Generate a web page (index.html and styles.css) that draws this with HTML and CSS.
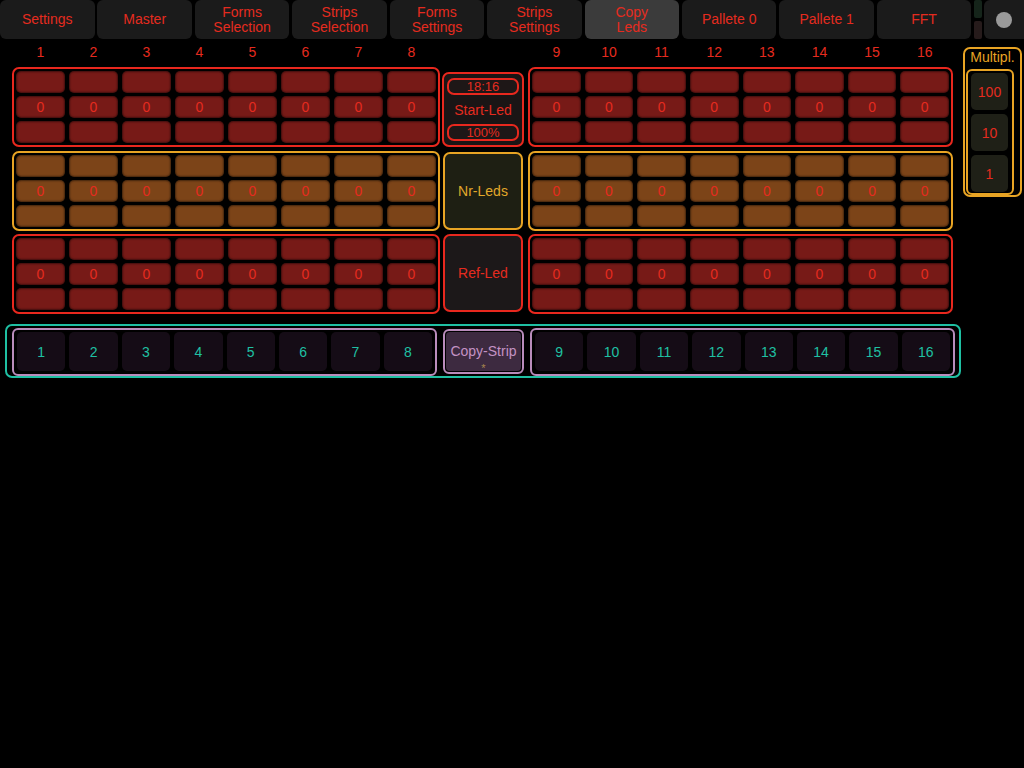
FILE: index.html
```html
<!DOCTYPE html>
<html>
<head>
<meta charset="utf-8">
<link rel="stylesheet" href="styles.css">
</head>
<body>
<div class="topbar">
  <div class="tab">Settings</div>
  <div class="tab">Master</div>
  <div class="tab">Forms<br>Selection</div>
  <div class="tab">Strips<br>Selection</div>
  <div class="tab">Forms<br>Settings</div>
  <div class="tab">Strips<br>Settings</div>
  <div class="tab active">Copy<br>Leds</div>
  <div class="tab">Pallete 0</div>
  <div class="tab">Pallete 1</div>
  <div class="tab">FFT</div>
  <div class="mini"><div class="mini-top"></div><div class="mini-bot"></div></div>
  <div class="circle-btn"><div class="circle"></div></div>
</div>

<div class="main">
  <div class="left">
    <div class="nums">
      <div class="nums-grp nl"><span>1</span><span>2</span><span>3</span><span>4</span><span>5</span><span>6</span><span>7</span><span>8</span></div>
      <div class="nums-gap"></div>
      <div class="nums-grp nr"><span>9</span><span>10</span><span>11</span><span>12</span><span>13</span><span>14</span><span>15</span><span>16</span></div>
    </div>

    <div class="row">
      <div class="grp gl red">
        <div class="c"></div><div class="c"></div><div class="c"></div><div class="c"></div><div class="c"></div><div class="c"></div><div class="c"></div><div class="c"></div>
        <div class="c">0</div><div class="c">0</div><div class="c">0</div><div class="c">0</div><div class="c">0</div><div class="c">0</div><div class="c">0</div><div class="c">0</div>
        <div class="c"></div><div class="c"></div><div class="c"></div><div class="c"></div><div class="c"></div><div class="c"></div><div class="c"></div><div class="c"></div>
      </div>
      <div class="center start">
        <div class="pill">18:16</div>
        <div class="start-label">Start-Led</div>
        <div class="pill">100%</div>
      </div>
      <div class="grp gr red">
        <div class="c"></div><div class="c"></div><div class="c"></div><div class="c"></div><div class="c"></div><div class="c"></div><div class="c"></div><div class="c"></div>
        <div class="c">0</div><div class="c">0</div><div class="c">0</div><div class="c">0</div><div class="c">0</div><div class="c">0</div><div class="c">0</div><div class="c">0</div>
        <div class="c"></div><div class="c"></div><div class="c"></div><div class="c"></div><div class="c"></div><div class="c"></div><div class="c"></div><div class="c"></div>
      </div>
    </div>

    <div class="row row2">
      <div class="grp gl orange">
        <div class="c"></div><div class="c"></div><div class="c"></div><div class="c"></div><div class="c"></div><div class="c"></div><div class="c"></div><div class="c"></div>
        <div class="c">0</div><div class="c">0</div><div class="c">0</div><div class="c">0</div><div class="c">0</div><div class="c">0</div><div class="c">0</div><div class="c">0</div>
        <div class="c"></div><div class="c"></div><div class="c"></div><div class="c"></div><div class="c"></div><div class="c"></div><div class="c"></div><div class="c"></div>
      </div>
      <div class="center nrleds">Nr-Leds</div>
      <div class="grp gr orange">
        <div class="c"></div><div class="c"></div><div class="c"></div><div class="c"></div><div class="c"></div><div class="c"></div><div class="c"></div><div class="c"></div>
        <div class="c">0</div><div class="c">0</div><div class="c">0</div><div class="c">0</div><div class="c">0</div><div class="c">0</div><div class="c">0</div><div class="c">0</div>
        <div class="c"></div><div class="c"></div><div class="c"></div><div class="c"></div><div class="c"></div><div class="c"></div><div class="c"></div><div class="c"></div>
      </div>
    </div>

    <div class="row row3">
      <div class="grp gl red">
        <div class="c"></div><div class="c"></div><div class="c"></div><div class="c"></div><div class="c"></div><div class="c"></div><div class="c"></div><div class="c"></div>
        <div class="c">0</div><div class="c">0</div><div class="c">0</div><div class="c">0</div><div class="c">0</div><div class="c">0</div><div class="c">0</div><div class="c">0</div>
        <div class="c"></div><div class="c"></div><div class="c"></div><div class="c"></div><div class="c"></div><div class="c"></div><div class="c"></div><div class="c"></div>
      </div>
      <div class="center refled">Ref-Led</div>
      <div class="grp gr red">
        <div class="c"></div><div class="c"></div><div class="c"></div><div class="c"></div><div class="c"></div><div class="c"></div><div class="c"></div><div class="c"></div>
        <div class="c">0</div><div class="c">0</div><div class="c">0</div><div class="c">0</div><div class="c">0</div><div class="c">0</div><div class="c">0</div><div class="c">0</div>
        <div class="c"></div><div class="c"></div><div class="c"></div><div class="c"></div><div class="c"></div><div class="c"></div><div class="c"></div><div class="c"></div>
      </div>
    </div>

    <div class="strip">
      <div class="sgrp">
        <div class="sb">1</div><div class="sb">2</div><div class="sb">3</div><div class="sb">4</div><div class="sb">5</div><div class="sb">6</div><div class="sb">7</div><div class="sb">8</div>
      </div>
      <div class="copy-strip"><div class="copy-inner"><span class="copy-label">Copy-Strip</span><span class="star">*</span></div></div>
      <div class="sgrp">
        <div class="sb">9</div><div class="sb">10</div><div class="sb">11</div><div class="sb">12</div><div class="sb">13</div><div class="sb">14</div><div class="sb">15</div><div class="sb">16</div>
      </div>
    </div>
  </div>

  <div class="mult">
    <div class="mult-label">Multipl.</div>
    <div class="mult-inner">
      <div class="mb">100</div>
      <div class="mb">10</div>
      <div class="mb">1</div>
    </div>
  </div>
</div>
</body>
</html>
```

FILE: styles.css
```css
html, body {
  margin: 0;
  padding: 0;
  background: #000;
}
body {
  width: 1024px;
  height: 768px;
  overflow: hidden;
  font-family: "Liberation Sans", Arial, sans-serif;
  font-size: 14px;
  color: #e52b1f;
}

/* top bar */
.topbar {
  display: flex;
  height: 39px;
}
.tab {
  flex: 0 0 94.5px;
  margin-right: 2.93px;
  background: #1b1b1b;
  border-radius: 6px;
  display: flex;
  align-items: center;
  justify-content: center;
  text-align: center;
  line-height: 15px;
  color: #e52b1f;
}
.tab.active {
  background: #3b3b3b;
}
.mini {
  flex: 0 0 8px;
  margin-right: 2px;
  display: flex;
  flex-direction: column;
  gap: 3px;
}
.mini-top {
  height: 18px;
  background: #15241a;
  border-radius: 2px;
}
.mini-bot {
  height: 18px;
  background: #261b1b;
  border-radius: 2px;
}
.circle-btn {
  flex: 0 0 40px;
  background: #1b1b1b;
  border-radius: 6px 0 0 6px;
  display: flex;
  align-items: center;
  justify-content: center;
}
.circle {
  width: 16px;
  height: 16px;
  border-radius: 50%;
  background: #9a9a9a;
}

/* main */
.main {
  display: flex;
  padding-left: 5px;
}
.left {
  width: 956px;
}

.nums {
  display: flex;
  height: 28px;
  margin-left: 7px;
}
.nums-grp {
  display: grid;
  grid-template-columns: repeat(8, 1fr);
  column-gap: 4px;
  padding: 5px 4px 0;
  box-sizing: border-box;
  line-height: 16px;
  text-align: center;
  color: #e52b1f;
}
.nums-grp.nl { width: 428px; }
.nums-grp.nr { width: 425px; }
.nums-gap { width: 88px; }

.row {
  display: flex;
  margin-left: 7px;
  height: 80px;
}
.row2 { margin-top: 4px; }
.row3 { margin-top: 3px; }

.grp {
  box-sizing: border-box;
  height: 80px;
  border: 2px solid;
  border-radius: 7px;
  padding: 2px;
  display: grid;
  grid-template-columns: repeat(8, 1fr);
  grid-template-rows: repeat(3, 22px);
  gap: 3px 4px;
}
.grp.gl { width: 428px; }
.grp.gr { width: 425px; }
.grp.red { border-color: #e8281e; }
.grp.orange { border-color: #e8a424; }

.c {
  box-sizing: border-box;
  border-radius: 5px;
  border: 1px solid rgba(0, 0, 0, 0.35);
  text-align: center;
  line-height: 20px;
  color: #e52b1f;
}
.red .c {
  background: #771a17;
  box-shadow: inset 0 0 2px rgba(0, 0, 0, 0.45);
}
.orange .c {
  background: #7c4418;
  box-shadow: inset 0 0 2px rgba(0, 0, 0, 0.45);
}

.center {
  box-sizing: border-box;
  border: 2px solid;
  border-radius: 7px;
  display: flex;
  flex-direction: column;
  align-items: center;
  justify-content: center;
}
.center.start {
  width: 82px;
  height: 75px;
  margin: 5px 4px 0 2px;
  border-color: #e8281e;
  background: #1a1515;
  justify-content: space-between;
  padding: 4px 3px 4px 3px;
}
.pill {
  box-sizing: border-box;
  width: 72px;
  height: 17px;
  border: 2px solid #e8281e;
  border-radius: 7px;
  background: #1e1717;
  text-align: center;
  font-size: 13px;
  line-height: 13px;
  color: #e52b1f;
}
.start-label {
  line-height: 16px;
  color: #e52b1f;
}
.center.nrleds {
  width: 80px;
  height: 78px;
  margin: 1px 5px 0 3px;
  border-color: #e8a424;
  background: #1e1f13;
  color: #e2a82a;
}
.center.refled {
  width: 80px;
  height: 78px;
  margin: 0 5px 0 3px;
  border-color: #e8281e;
  background: #1c1819;
  color: #e52b1f;
}

/* bottom strip */
.strip {
  margin-top: 10px;
  box-sizing: border-box;
  height: 54px;
  border: 2px solid #1fc0a3;
  border-radius: 7px;
  padding: 2px 4px 0 5px;
  display: flex;
  align-items: flex-start;
}
.sgrp {
  box-sizing: border-box;
  width: 425px;
  height: 48px;
  border: 2px solid #b98cbb;
  border-radius: 6px;
  padding: 2px 3px 3px 3px;
  display: flex;
  gap: 4px;
}
.sb {
  flex: 1;
  background: #150c16;
  border-radius: 5px;
  display: flex;
  align-items: center;
  justify-content: center;
  color: #1fc0a3;
}
.copy-strip {
  box-sizing: border-box;
  width: 81px;
  height: 45px;
  margin: 1px 6px 0;
  border: 2px solid #b98cbb;
  border-radius: 6px;
  padding: 1px;
  display: flex;
}
.copy-inner {
  flex: 1;
  background: #3d2a40;
  border-radius: 4px;
  display: flex;
  flex-direction: column;
  align-items: center;
  padding-top: 11px;
  box-sizing: border-box;
}
.copy-label {
  color: #c492c4;
  line-height: 16px;
}
.star {
  color: #a8864e;
  font-size: 11px;
  line-height: 11px;
  margin-top: 4px;
}

/* multiplier */
.mult {
  box-sizing: border-box;
  width: 59px;
  height: 150px;
  margin: 8px 0 0 2px;
  border: 2px solid #e8a424;
  border-radius: 7px;
  padding: 0 6px 0 1px;
}
.mult-label {
  height: 18px;
  line-height: 17px;
  text-align: center;
  color: #e8a424;
  margin-bottom: 2px;
  margin-right: -5px;
  white-space: nowrap;
}
.mult-inner {
  box-sizing: border-box;
  width: 48px;
  height: 126px;
  border: 2px solid #e8a424;
  border-radius: 6px;
  padding: 2px 4px 1px 3px;
  display: flex;
  flex-direction: column;
  gap: 4px;
}
.mb {
  height: 37px;
  background: #1f2017;
  border-radius: 5px;
  display: flex;
  align-items: center;
  justify-content: center;
  color: #e52b1f;
}
```
